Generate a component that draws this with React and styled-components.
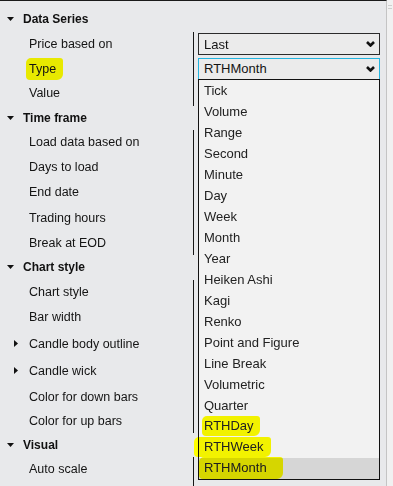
import styled, { createGlobalStyle } from "styled-components";

const GlobalStyle = createGlobalStyle`
  html, body {
    margin: 0;
    padding: 0;
  }
  body {
    background: #f0f0f0;
    font-family: "Liberation Sans", Arial, sans-serif;
  }
`;

const Frame = styled.div`
  display: flex;
  width: 393px;
  height: 486px;
  overflow: hidden;
`;

const Panel = styled.div`
  flex: none;
  width: 387px;
  box-sizing: border-box;
  padding-top: 6px;
  background: #e8e9eb;
  border-top: 1px solid #1a1a1a;
  border-right: 1px solid #c4c4c4;
`;

const Gutter = styled.div`
  flex: 1;
  display: flex;
  flex-direction: column;
  align-items: center;
  gap: 2px;
  padding-top: 5px;
  background: #f1f1f1;
`;

const Grip = styled.span`
  width: 4px;
  height: 1px;
  background: #cfcfcf;
`;

const HeaderRow = styled.div`
  display: flex;
  align-items: center;
  gap: 9px;
  height: ${(p) => p.$h}px;
  padding-left: 7px;
  font-size: 12px;
  font-weight: bold;
  color: #111;
`;

const Row = styled.div`
  display: grid;
  grid-template-columns: 193px 1fr;
  height: ${(p) => p.$h}px;
`;

const Label = styled.div`
  display: flex;
  align-items: center;
  gap: 11px;
  padding-left: ${(p) => (p.$expander ? 14 : 29)}px;
  font-size: 12.5px;
  color: #141414;
`;

const ValueCell = styled.div`
  display: flex;
  align-items: ${(p) => (p.$last ? "flex-start" : "center")};
  border-left: 1px solid #161616;
  padding: 0 6px 0 4px;
`;

const SelectBox = styled.div`
  position: relative;
  flex: 1;
  height: 22px;
  box-sizing: border-box;
  display: flex;
  align-items: center;
  justify-content: space-between;
  padding: 0 4px 0 5px;
  background: #ebebeb;
  border: 1px solid ${(p) => (p.$focused ? "#22b4df" : "#2b2b2b")};
  font-size: 13px;
  color: #141414;
`;

const Options = styled.div`
  position: absolute;
  z-index: 10;
  top: 100%;
  left: -1px;
  right: -1px;
  background: #f2f2f2;
  border: 1px solid #111;
`;

const Option = styled.div`
  display: flex;
  align-items: center;
  height: 21px;
  padding-left: 5px;
  font-size: 13px;
  color: #222;
  background: ${(p) => (p.$selected ? "#d6d6d6" : "transparent")};
`;

const Marker = styled.span`
  display: inline-block;
  line-height: 14px;
  padding: ${(p) => `${p.$v}px ${p.$r}px ${p.$v}px ${p.$l}px`};
  margin: ${(p) => `-${p.$v}px -${p.$r}px -${p.$v}px -${p.$l}px`};
  background: #ffff00;
  mix-blend-mode: multiply;
  border-radius: 5px 3px 6px 4px;
`;

const Chevron = () => (
  <svg width="9" height="6" viewBox="0 0 9 6">
    <polyline points="1,1 4.5,4.5 8,1" fill="none" stroke="#111" strokeWidth="2.6" />
  </svg>
);

const Expanded = () => (
  <svg width="7" height="4" viewBox="0 0 7 4">
    <polygon points="0,0 7,0 3.5,4" fill="#111" />
  </svg>
);

const Collapsed = () => (
  <svg width="4" height="7" viewBox="0 0 4 7">
    <polygon points="0,0 4,3.5 0,7" fill="#111" />
  </svg>
);

const typeOptions = [
  "Tick", "Volume", "Range", "Second", "Minute", "Day", "Week", "Month", "Year",
  "Heiken Ashi", "Kagi", "Renko", "Point and Figure", "Line Break", "Volumetric",
  "Quarter", "RTHDay", "RTHWeek", "RTHMonth",
];

const marked = {
  RTHDay: { l: 2, r: 6, v: 3 },
  RTHWeek: { l: 10, r: 8, v: 3 },
  RTHMonth: { l: 5, r: 16, v: 4 },
};

const groups = [
  {
    title: "Data Series",
    h: 24.5,
    rows: [
      { label: "Price based on", h: 25, select: "Last" },
      { label: "Type", h: 24.5, select: "RTHMonth", open: true, mark: true },
      { label: "Value", h: 24.5 },
    ],
  },
  {
    title: "Time frame",
    h: 24.5,
    rows: [
      { label: "Load data based on", h: 24.5 },
      { label: "Days to load", h: 25 },
      { label: "End date", h: 25.5 },
      { label: "Trading hours", h: 25.5 },
      { label: "Break at EOD", h: 24.5 },
    ],
  },
  {
    title: "Chart style",
    h: 24.5,
    rows: [
      { label: "Chart style", h: 25 },
      { label: "Bar width", h: 25.5 },
      { label: "Candle body outline", h: 27, expander: true },
      { label: "Candle wick", h: 27, expander: true },
      { label: "Color for down bars", h: 25 },
      { label: "Color for up bars", h: 24 },
    ],
  },
  {
    title: "Visual",
    h: 24,
    rows: [{ label: "Auto scale", h: 24 }],
  },
];

const OptionText = ({ name }) => {
  const m = marked[name];
  if (!m) return name;
  return (
    <Marker $l={m.l} $r={m.r} $v={m.v}>
      {name}
    </Marker>
  );
};

const PropertyRow = ({ row }) => (
  <Row $h={row.h}>
    <Label $expander={row.expander}>
      {row.expander && <Collapsed />}
      {row.mark ? (
        <Marker $l={3} $r={7} $v={4}>
          {row.label}
        </Marker>
      ) : (
        row.label
      )}
    </Label>
    <ValueCell>
      {row.select && (
        <SelectBox $focused={row.open}>
          <span>{row.select}</span>
          <Chevron />
          {row.open && (
            <Options>
              {typeOptions.map((o) => (
                <Option key={o} $selected={o === row.select}>
                  <OptionText name={o} />
                </Option>
              ))}
            </Options>
          )}
        </SelectBox>
      )}
    </ValueCell>
  </Row>
);

// the grid keeps running below the last row, so the separator goes on to the bottom
const Filler = styled(Row)`
  height: 10px;
`;

export default function App() {
  return (
    <>
      <GlobalStyle />
      <Frame>
        <Panel>
          {groups.map((g) => (
            <div key={g.title}>
              <HeaderRow $h={g.h}>
                <Expanded />
                {g.title}
              </HeaderRow>
              {g.rows.map((r) => (
                <PropertyRow key={r.label} row={r} />
              ))}
            </div>
          ))}
          <Filler>
            <div />
            <ValueCell />
          </Filler>
        </Panel>
        <Gutter>
          <Grip />
          <Grip />
        </Gutter>
      </Frame>
    </>
  );
}
